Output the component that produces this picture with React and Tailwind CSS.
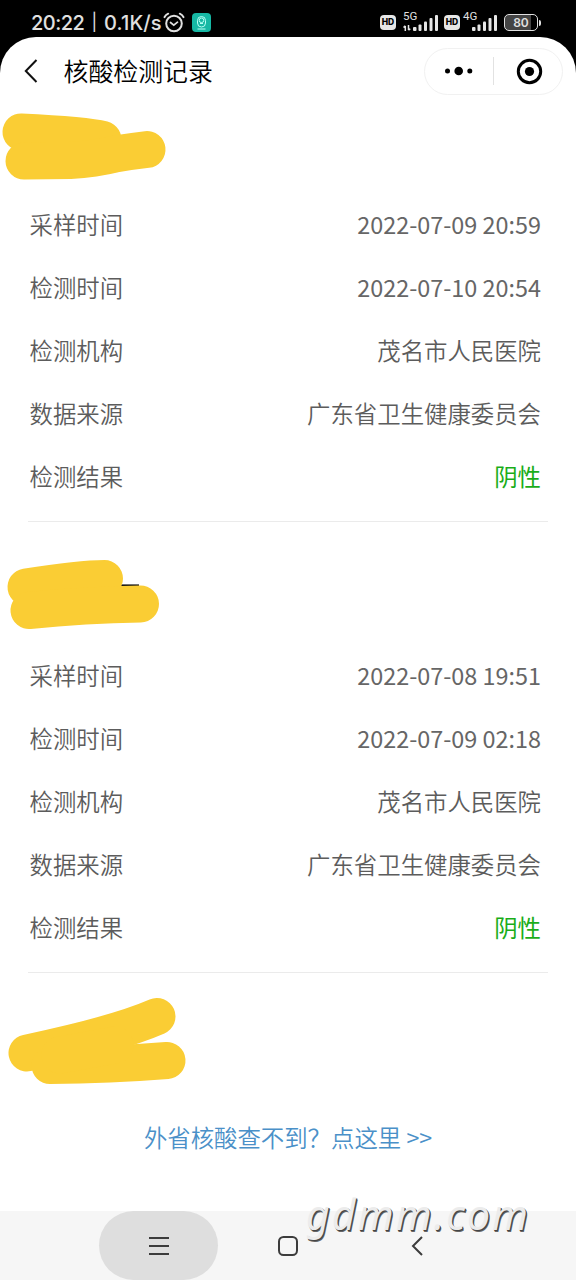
const records = [
  {
    sampled: "2022-07-09 20:59",
    tested: "2022-07-10 20:54",
    org: "茂名市人民医院",
    source: "广东省卫生健康委员会",
    result: "阴性",
  },
  {
    sampled: "2022-07-08 19:51",
    tested: "2022-07-09 02:18",
    org: "茂名市人民医院",
    source: "广东省卫生健康委员会",
    result: "阴性",
  },
];

function Scribble({ className, viewBox, paths, children }) {
  return (
    <svg className={`block w-full ${className}`} viewBox={viewBox} fill="none">
      {children}
      {paths.map((d) => (
        <path key={d} d={d} stroke="#facd34" strokeWidth="37" strokeLinecap="round" strokeLinejoin="round" />
      ))}
    </svg>
  );
}

function Signal() {
  return (
    <svg className="h-[17px] w-[26px]" viewBox="0 0 26 17" fill="#e6e6e6">
      <rect x="0" y="13" width="3.5" height="4" rx="1" />
      <rect x="5.5" y="10.5" width="3" height="6.5" rx="1" />
      <rect x="11" y="7.5" width="3" height="9.5" rx="1" />
      <rect x="16.5" y="4" width="3" height="13" rx="1" />
      <rect x="22" y="1" width="3" height="16" rx="1" />
    </svg>
  );
}

function HdBadge() {
  return (
    <span className="flex h-[15px] w-4 items-center justify-center rounded-[4px] bg-[#e6e6e6] font-['Inter',sans-serif] text-[8.5px] leading-none font-extrabold text-black">
      HD
    </span>
  );
}

function StatusBar() {
  return (
    <div className="flex h-[37px] items-center bg-black pt-2 pr-[35px] pl-[31px] text-[#e0e0e0]">
      <span className="flex w-[130px] items-center font-['Inter',sans-serif] text-[20px] leading-none font-medium whitespace-nowrap">
        <span className="tracking-[-0.5px]">20:22</span>
        <span className="mx-[7px] text-[17px] font-normal">|</span>
        <span className="tracking-[0.1px]">0.1K/s</span>
      </span>
      <svg className="ml-[2px] h-[21px] w-[22px]" viewBox="0 0 22 21" fill="none" stroke="#e0e0e0" strokeLinecap="round">
        <circle cx="11" cy="11.5" r="7.8" strokeWidth="2" />
        <path d="M7.5 10.5l3.3 2.7 3.7-3" strokeWidth="1.7" />
        <path d="M1.5 5.2C2.2 3.6 3.5 2.4 5.2 1.7M20.5 5.2c-.7-1.6-2-2.8-3.7-3.5" strokeWidth="2" />
      </svg>
      <svg className="ml-[7px] h-[19px] w-[19px]" viewBox="0 0 19 19" fill="none" stroke="#b8fff4" strokeWidth="1">
        <rect width="19" height="19" rx="4" fill="#16b8a4" stroke="none" />
        <rect x="5.5" y="3.5" width="8" height="10.5" rx="4" />
        <circle cx="9.5" cy="7.3" r="2.3" />
        <path d="M8 10.5h3M5.5 16h8" />
      </svg>
      <div className="ml-auto flex items-center">
        <HdBadge />
        <div className="relative ml-[9px]">
          <span className="absolute -top-[3px] -left-[2px] font-['Roboto',sans-serif] text-[11.5px] leading-none">5G</span>
          <svg className="absolute top-[11px] -left-[2px] h-[6px] w-[8px]" viewBox="0 0 8 6" stroke="#e6e6e6" strokeWidth="1.5" fill="none">
            <path d="M2.3 6V1M.5 2.5L2.3.8M5.5 0v5M7.3 3.7L5.5 5.3" />
          </svg>
          <div className="pl-[8px]">
            <Signal />
          </div>
        </div>
        <div className="ml-[5px]">
          <HdBadge />
        </div>
        <div className="relative ml-[4px] pl-[8px]">
          <span className="absolute -top-[3px] -left-[1px] font-['Roboto',sans-serif] text-[11.5px] leading-none">4G</span>
          <Signal />
        </div>
        <div className="ml-[6px] flex h-[17px] w-[34px] items-center justify-center rounded-[5px] border-[1.5px] border-[#e0e0e0] bg-[linear-gradient(90deg,#444_80%,#000_80%)] font-['Inter',sans-serif] text-[12px] leading-none font-semibold">
          80
        </div>
        <div className="ml-[1px] h-[6px] w-[2px] rounded-r bg-[#e0e0e0]" />
      </div>
    </div>
  );
}

function TitleBar() {
  return (
    <header className="flex h-[68px] items-center pr-[13px] pl-6">
      <svg className="h-6 w-[14px]" viewBox="0 0 14 24" fill="none" stroke="#111" strokeWidth="2">
        <path d="M12.5 1L1.8 12l10.7 11" />
      </svg>
      <h1 className="ml-[25.5px] pb-[2px] text-[24.9px] leading-none font-[350] text-black">核酸检测记录</h1>
      <div className="ml-auto flex h-[47px] w-[139px] items-center rounded-full border border-[#f1f1f1]">
        <svg className="h-3 w-[68px]" viewBox="0 0 68 12" fill="#000">
          <circle cx="22.5" cy="6" r="2.5" />
          <circle cx="33.7" cy="6" r="4.3" />
          <circle cx="44.8" cy="6" r="2.5" />
        </svg>
        <div className="h-7 w-px bg-[#e2e2e2]" />
        <svg className="ml-[22px] h-[27px] w-[27px]" viewBox="0 0 27 27">
          <circle cx="13.5" cy="13.5" r="11.2" fill="none" stroke="#000" strokeWidth="3" />
          <circle cx="13.5" cy="13.5" r="4.6" fill="#000" />
        </svg>
      </div>
    </header>
  );
}

function Row({ label, value, color = "text-[#666]" }) {
  return (
    <div className="flex h-[63px] items-center justify-between pr-[7px] pl-[1.5px] text-[23.4px] leading-none text-[#666]">
      <span className="font-[350] text-[#5c5c5c]">{label}</span>
      <span className={color}>{value}</span>
    </div>
  );
}

function RecordRows({ record }) {
  return (
    <div className="mx-7 border-b border-[#ebebeb] pb-[13px]">
      <Row label="采样时间" value={record.sampled} />
      <Row label="检测时间" value={record.tested} />
      <Row label="检测机构" value={record.org} color="font-[350] text-[#5c5c5c]" />
      <Row label="数据来源" value={record.source} color="font-[350] text-[#5c5c5c]" />
      <Row label="检测结果" value={record.result} color="text-[#1aad19]" />
    </div>
  );
}

function NavBar() {
  return (
    <nav className="relative flex h-[69px] items-center bg-[#f6f6f6] pl-[99px]">
      <div className="flex h-[69px] w-[119px] items-center justify-center rounded-full bg-[#dedede]">
        <svg className="h-[20px] w-[20px]" viewBox="0 0 20 20" stroke="#3c3c3c" strokeWidth="2">
          <path d="M0 2h20M0 10h20M0 18h20" />
        </svg>
      </div>
      <svg className="ml-[60px] h-5 w-5" viewBox="0 0 20 20" fill="none" stroke="#3c3c3c" strokeWidth="2">
        <rect x="1" y="1" width="18" height="18" rx="4.5" />
      </svg>
      <svg className="ml-[113px] h-5 w-[12px]" viewBox="0 0 12 20" fill="none" stroke="#3c3c3c" strokeWidth="2">
        <path d="M11 1L2 10l9 9" />
      </svg>
      <span className="absolute -top-[25px] left-[306px] font-['Noto_Sans',sans-serif] text-[41px] leading-[57px] tracking-[2.1px] whitespace-nowrap text-[#ececec] italic [text-shadow:1px_1px_0_#444,1.5px_1.5px_0_#666]">
        gdmm.com
      </span>
    </nav>
  );
}

export default function App() {
  return (
    <div className="flex h-[1280px] w-[576px] flex-col overflow-hidden bg-black font-['Noto_Sans_CJK_SC',sans-serif]">
      <StatusBar />
      <main className="flex flex-1 flex-col rounded-t-[36px] bg-white">
        <TitleBar />
        <Scribble
          className="h-[88px]"
          viewBox="0 105 576 88"
          paths={["M21 132Q85 135 103 139.500", "M24 161L70 160.500Q95 159 115 154Q130 151.500 147 149.500"]}
        />
        <RecordRows record={records[0]} />
        <Scribble
          className="h-[122px]"
          viewBox="0 522 576 122"
          paths={["M26 587Q80 578.500 104.500 578.500", "M29 610.500Q85 605 140.500 604"]}
        >
          <path d="M118 585.200H139" stroke="#111" strokeWidth="1.6" />
        </Scribble>
        <RecordRows record={records[1]} />
        <Scribble
          className="h-[127px]"
          viewBox="0 973 576 127"
          paths={["M27 1053Q117 1034 157 1016.500", "M50 1065.500Q110 1065 167 1060.500", "M60 1055L115 1045"]}
        />
        <a className="mt-[26px] text-center text-[23.4px] leading-none font-[350] text-[#4a90c8]">外省核酸查不到？点这里 &gt;&gt;</a>
        <div className="flex-1" />
        <NavBar />
      </main>
    </div>
  );
}
